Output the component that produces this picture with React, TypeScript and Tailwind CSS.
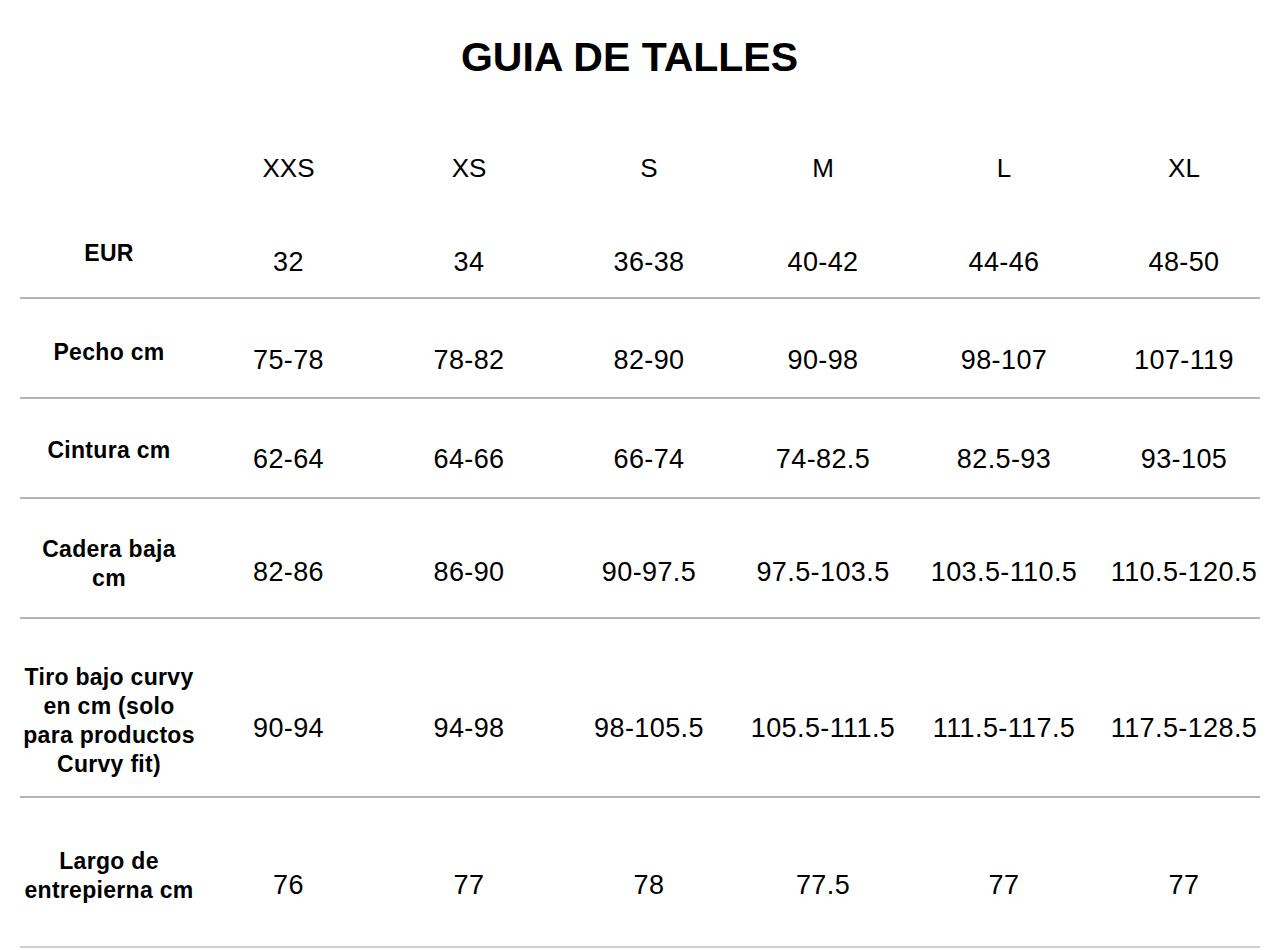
const sizes = ["XXS", "XS", "S", "M", "L", "XL"];

type Row = {
  label: React.ReactNode;
  values: string[];
  height: string;
  labelPad: string;
  valuePad: string;
  line: string;
};

const rows: Row[] = [
  {
    label: "EUR",
    values: ["32", "34", "36-38", "40-42", "44-46", "48-50"],
    height: "h-[81px]",
    labelPad: "pt-[23px]",
    valuePad: "pt-[30px]",
    line: "bg-[#b4b4b4]",
  },
  {
    label: "Pecho cm",
    values: ["75-78", "78-82", "82-90", "90-98", "98-107", "107-119"],
    height: "h-[98px]",
    labelPad: "pt-[39px]",
    valuePad: "pt-[45px]",
    line: "bg-[#b4b4b4]",
  },
  {
    label: "Cintura cm",
    values: ["62-64", "64-66", "66-74", "74-82.5", "82.5-93", "93-105"],
    height: "h-[98px]",
    labelPad: "pt-[37px]",
    valuePad: "pt-[44px]",
    line: "bg-[#b4b4b4]",
  },
  {
    label: (
      <>
        Cadera baja
        <br />
        cm
      </>
    ),
    values: ["82-86", "86-90", "90-97.5", "97.5-103.5", "103.5-110.5", "110.5-120.5"],
    height: "h-[118px]",
    labelPad: "pt-[36px]",
    valuePad: "pt-[57px]",
    line: "bg-[#b4b4b4]",
  },
  {
    label: (
      <>
        Tiro bajo curvy
        <br />
        en cm (solo
        <br />
        para productos
        <br />
        Curvy fit)
      </>
    ),
    values: ["90-94", "94-98", "98-105.5", "105.5-111.5", "111.5-117.5", "117.5-128.5"],
    height: "h-[177px]",
    labelPad: "pt-[44px]",
    valuePad: "pt-[93px]",
    line: "bg-[#b4b4b4]",
  },
  {
    label: (
      <>
        Largo de
        <br />
        entrepierna cm
      </>
    ),
    values: ["76", "77", "78", "77.5", "77", "77"],
    height: "h-[148px]",
    labelPad: "pt-[49px]",
    valuePad: "pt-[71px]",
    line: "bg-[#cfcfcf]",
  },
];

const grid =
  "grid grid-cols-[178px_181px_180px_180px_168px_194px_166px] w-[1247px]";

export default function App() {
  return (
    <div className="min-h-[950px] w-[1280px] bg-white px-[20px] font-['Liberation_Sans',Arial,sans-serif] text-black">
      <div className="flex justify-center pt-[37px] pr-[21px]">
        <h1 className="text-[41px] font-bold leading-[40px]">GUIA DE TALLES</h1>
      </div>

      <div className={`${grid} mt-[43px] h-[96px]`}>
        <div />
        {sizes.map((s) => (
          <div key={s} className="pt-[32px] text-center text-[26px] leading-[32px]">
            {s}
          </div>
        ))}
      </div>

      {rows.map((row, i) => (
        <div key={i}>
          <div className={`${grid} ${row.height}`}>
            <div
              className={`${row.labelPad} text-center text-[23px] font-bold leading-[29px] tracking-[0.3px] whitespace-nowrap`}
            >
              {row.label}
            </div>
            {row.values.map((v, j) => (
              <div
                key={j}
                className={`${row.valuePad} text-center text-[27px] leading-[32px] tracking-[0.4px] whitespace-nowrap`}
              >
                {v}
              </div>
            ))}
          </div>
          <div className={`h-[2px] w-[1240px] ${row.line}`} />
        </div>
      ))}
    </div>
  );
}
